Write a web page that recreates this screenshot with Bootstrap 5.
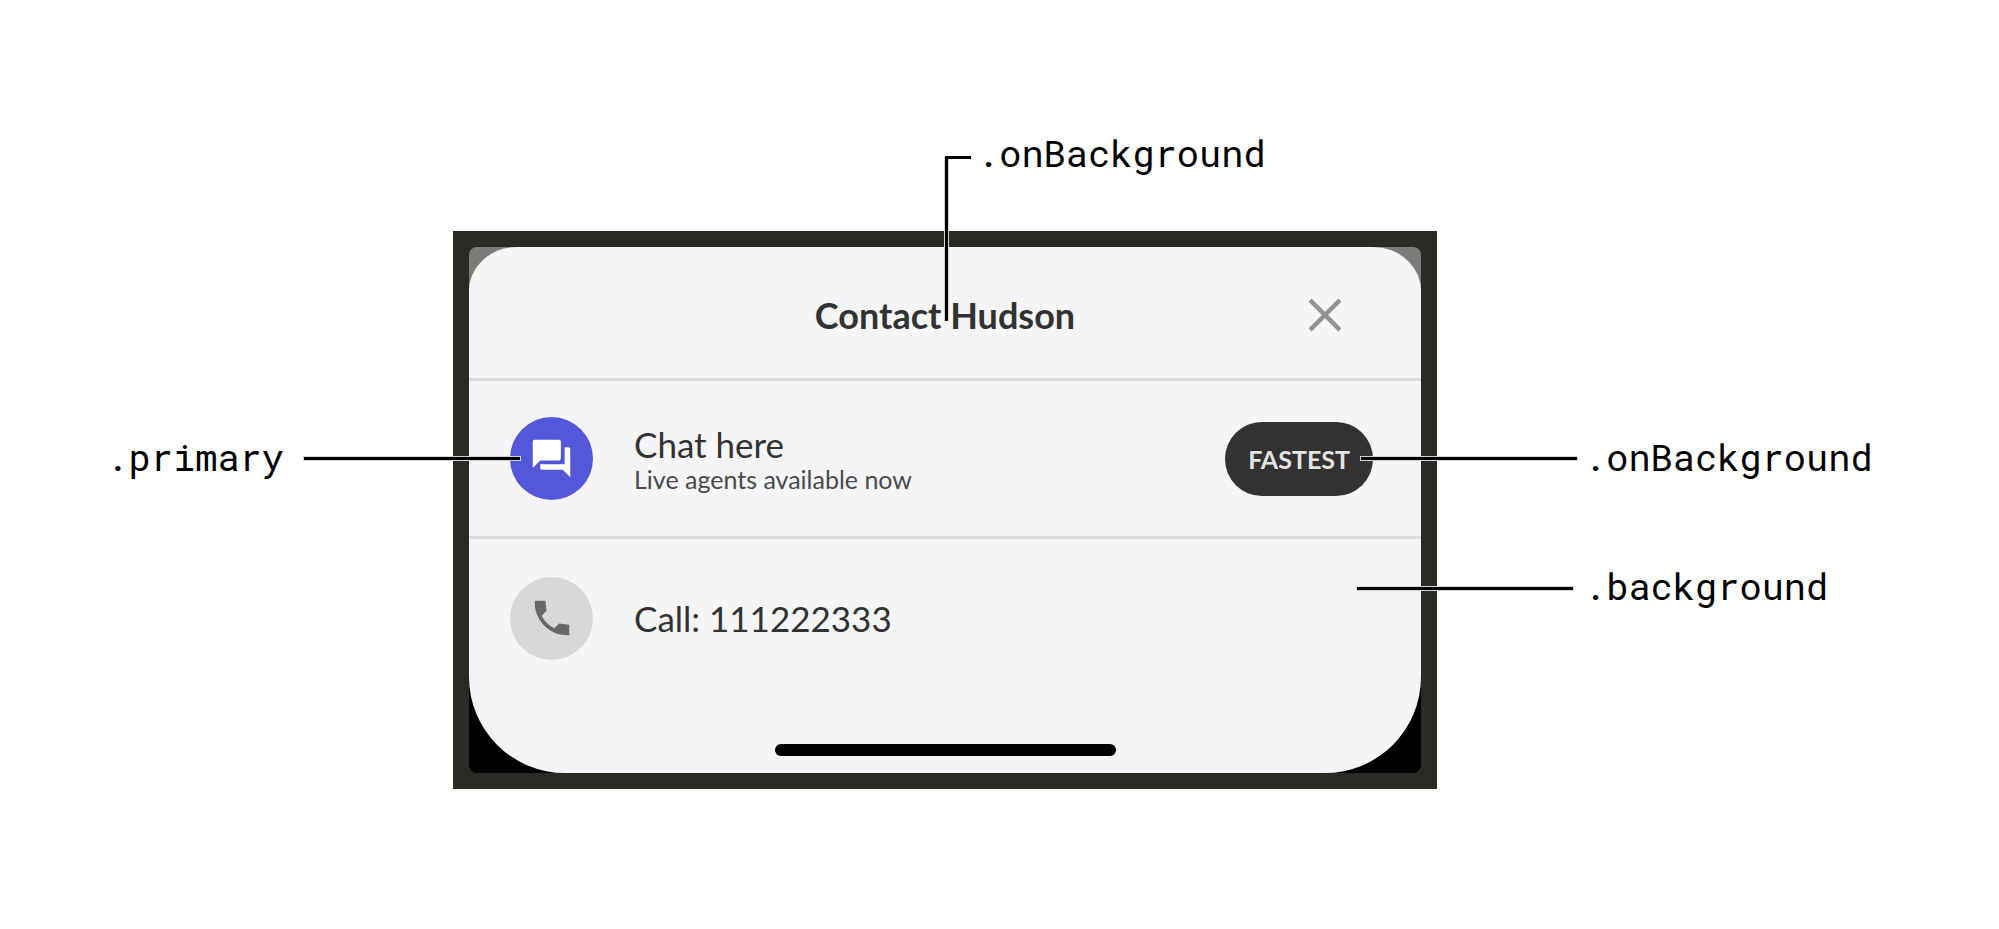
<!DOCTYPE html>
<html lang="en">
<head>
<meta charset="utf-8">
<meta name="viewport" content="width=device-width, initial-scale=1">
<title>Contact Hudson – colour roles</title>
<link href="https://cdn.jsdelivr.net/npm/bootstrap@5.3.0/dist/css/bootstrap.min.css" rel="stylesheet">
<style>
  body { background: #fff; font-family: Lato, sans-serif; color: #323232; }
  .stage {
    display: grid;
    grid-template-columns: minmax(0, 453fr) minmax(0, 984fr) minmax(0, 562fr);
    padding: 231px 0 140px;
  }
  .device { grid-column: 2; background: #2a2b25; padding: 16px; }
  .screen { background: linear-gradient(#7b7b7b 50%, #000 50%); border-radius: 8px; }
  .sheet { background: #f5f5f8; border-radius: 48px 48px 96px 96px / 44px 44px 96px 96px; }
  .sheet-row { min-height: 158px; padding: 0 48px 0 41px; gap: 41px; }
  .sheet-head { min-height: 134px; padding-top: 4px; }
  .ruled { border-bottom: 3px solid #dcdcde; }
  .title-text { font-size: 36px; line-height: 42px; font-weight: 700; }
  .row-title { font-size: 35px; line-height: 40px; color: #323232; text-decoration: none; }
  .row-note { font-size: 25px; line-height: 30px; color: #4a4a4c; }
  .close-btn { right: 72px; width: 48px; height: 48px; color: #929292; }
  .disc { width: 83px; height: 83px; }
  .disc-primary { background: #5258d9; color: #fff; }
  .disc-muted { background: #d8d8da; color: #686868; }
  .pill { background: #323232; color: #e4e4e4; font-size: 25px; line-height: 30px; font-weight: 700; padding: 22px 23px; }
  .home-bar { width: 341px; height: 12px; background: #000; }
  .home-area { padding: 47px 0 17px; }

  /* Callouts drawn over the sheet, each tied to the row it names */
  .callout { font: 37px/48px "Roboto Mono", "DejaVu Sans Mono", monospace; color: #000; z-index: 2; white-space: nowrap; }
  .callout-text { padding-bottom: 4px; }
  .leader { height: 3px; width: 216px; background: #000; box-shadow: 0 0 0 1px #d4d4d4; }
  .callout-left { right: calc(100% - 51px); gap: 20px; }
  .callout-right { left: calc(100% - 60px); gap: 7px; }
  .callout-low { left: calc(100% - 64px); gap: 11px; top: 23px; }
  .callout-top { left: 50%; top: -118px; gap: 6px; }
  .elbow { width: 26px; height: 165px; margin-top: 27px; border: solid #000; border-width: 3px 0 0 3px; box-shadow: -1px 0 #d4d4d4, inset 1px 0 #d4d4d4; }
</style>
</head>
<body>
<main class="stage">
  <section class="device" aria-labelledby="sheet-title">
    <div class="screen">
      <div class="sheet">
        <header class="sheet-head ruled position-relative d-flex align-items-center justify-content-center">
          <h1 id="sheet-title" class="title-text m-0">Contact Hudson</h1>
          <button type="button" class="close-btn btn border-0 p-0 position-absolute d-flex align-items-center justify-content-center" aria-label="Close">
            <svg width="34" height="34" viewBox="0 0 32 32" fill="none" stroke="currentColor" stroke-width="4"><path d="M2 2 30 30M30 2 2 30"/></svg>
          </button>
          <div class="callout callout-top position-absolute d-flex align-items-start">
            <span class="elbow"></span><span class="callout-text">.onBackground</span>
          </div>
        </header>
        <ul class="list-unstyled m-0">
          <li class="sheet-row ruled position-relative d-flex align-items-center">
            <span class="disc disc-primary rounded-circle d-flex align-items-center justify-content-center flex-shrink-0">
              <svg width="45" height="45" viewBox="0 0 24 24" fill="currentColor"><path d="M21 6h-2v9H6v2c0 .55.45 1 1 1h11l4 4V7c0-.55-.45-1-1-1zm-4 6V3c0-.55-.45-1-1-1H3c-.55 0-1 .45-1 1v14l4-4h10c.55 0 1-.45 1-1z"/></svg>
            </span>
            <div class="d-flex flex-column flex-grow-1">
              <a href="#chat" class="row-title">Chat here</a>
              <span class="row-note">Live agents available now</span>
            </div>
            <span class="pill rounded-pill">FASTEST</span>
            <div class="callout callout-left position-absolute d-flex align-items-center">
              <span class="callout-text">.primary</span><span class="leader"></span>
            </div>
            <div class="callout callout-right position-absolute d-flex align-items-center">
              <span class="leader"></span><span class="callout-text">.onBackground</span>
            </div>
          </li>
          <li class="sheet-row position-relative d-flex align-items-center">
            <span class="disc disc-muted rounded-circle d-flex align-items-center justify-content-center flex-shrink-0">
              <svg width="46" height="46" viewBox="0 0 24 24" fill="currentColor"><path d="M21 15.46l-5.27-.61-2.52 2.52c-2.83-1.44-5.15-3.75-6.59-6.59l2.53-2.53L8.54 3H3.03C2.45 13.18 10.82 21.55 21 20.97v-5.51z"/></svg>
            </span>
            <a href="tel:111222333" class="row-title">Call: 111222333</a>
            <div class="callout callout-low position-absolute d-flex align-items-center">
              <span class="leader"></span><span class="callout-text">.background</span>
            </div>
          </li>
        </ul>
        <div class="home-area d-flex justify-content-center"><span class="home-bar rounded-pill"></span></div>
      </div>
    </div>
  </section>
</main>
<script src="https://cdn.jsdelivr.net/npm/bootstrap@5.3.0/dist/js/bootstrap.bundle.min.js"></script>
</body>
</html>
